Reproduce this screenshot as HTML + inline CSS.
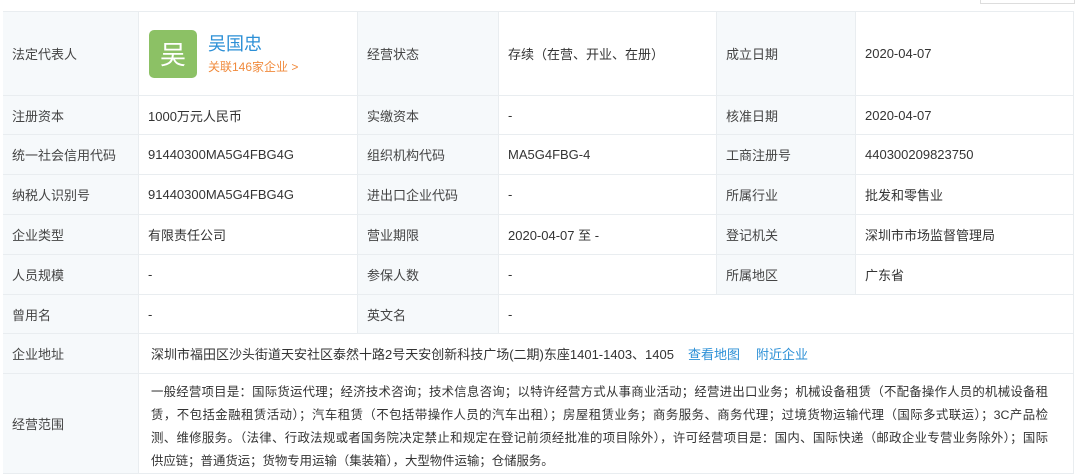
<!DOCTYPE html>
<html><head><meta charset="utf-8"><style>
body{margin:0;width:1080px;height:472px;background:#fff;font-family:"Liberation Sans","Noto Sans CJK SC",sans-serif;font-size:13px;color:#333;position:relative;overflow:hidden}
.c{position:absolute;box-sizing:border-box;border-right:1px solid #e9edf0;border-bottom:1px solid #e9edf0;display:flex;align-items:center;padding-left:9px}
.l{background:#f6f9fb;color:#444}
a{color:#2b8fd6;text-decoration:none}
.ln{width:897px;white-space:nowrap;font-size:12.4px;text-align:justify;text-align-last:justify;text-justify:inter-character;height:23px;overflow:hidden}
.ln.e{text-align-last:left}
</style></head><body>
<div style="position:absolute;left:980px;top:-1px;width:93px;height:4px;border:1px solid #ddd;border-top:none"></div>
<div style="position:absolute;left:3px;top:11px;width:1071px;height:462px;border-top:1px solid #e9edf0;border-left:1px solid #e9edf0;box-sizing:border-box"></div>
<div class="c l" style="left:3px;top:12px;width:136px;height:84px">法定代表人</div>
<div class="c" style="left:139px;top:12px;width:219px;height:84px;padding-left:10px">
<div style="width:48px;height:48px;background:#8cc165;border-radius:5px;color:#fff;font-size:26px;display:flex;align-items:center;justify-content:center">吴</div>
<div style="margin-left:11px"><div style="color:#2b8fd6;font-size:18px;line-height:22px">吴国忠</div><div style="color:#f08a3c;font-size:12px;margin-top:3px">关联146家企业 &gt;</div></div></div>
<div class="c l" style="left:358px;top:12px;width:141px;height:84px">经营状态</div>
<div class="c" style="left:499px;top:12px;width:218px;height:84px">存续（在营、开业、在册）</div>
<div class="c l" style="left:717px;top:12px;width:139px;height:84px">成立日期</div>
<div class="c" style="left:856px;top:12px;width:218px;height:84px">2020-04-07</div>
<div class="c l" style="left:3px;top:96px;width:136px;height:39px">注册资本</div>
<div class="c" style="left:139px;top:96px;width:219px;height:39px">1000万元人民币</div>
<div class="c l" style="left:358px;top:96px;width:141px;height:39px">实缴资本</div>
<div class="c" style="left:499px;top:96px;width:218px;height:39px">-</div>
<div class="c l" style="left:717px;top:96px;width:139px;height:39px">核准日期</div>
<div class="c" style="left:856px;top:96px;width:218px;height:39px">2020-04-07</div>
<div class="c l" style="left:3px;top:135px;width:136px;height:40px">统一社会信用代码</div>
<div class="c" style="left:139px;top:135px;width:219px;height:40px">91440300MA5G4FBG4G</div>
<div class="c l" style="left:358px;top:135px;width:141px;height:40px">组织机构代码</div>
<div class="c" style="left:499px;top:135px;width:218px;height:40px">MA5G4FBG-4</div>
<div class="c l" style="left:717px;top:135px;width:139px;height:40px">工商注册号</div>
<div class="c" style="left:856px;top:135px;width:218px;height:40px">440300209823750</div>
<div class="c l" style="left:3px;top:175px;width:136px;height:40px">纳税人识别号</div>
<div class="c" style="left:139px;top:175px;width:219px;height:40px">91440300MA5G4FBG4G</div>
<div class="c l" style="left:358px;top:175px;width:141px;height:40px">进出口企业代码</div>
<div class="c" style="left:499px;top:175px;width:218px;height:40px">-</div>
<div class="c l" style="left:717px;top:175px;width:139px;height:40px">所属行业</div>
<div class="c" style="left:856px;top:175px;width:218px;height:40px">批发和零售业</div>
<div class="c l" style="left:3px;top:215px;width:136px;height:40px">企业类型</div>
<div class="c" style="left:139px;top:215px;width:219px;height:40px">有限责任公司</div>
<div class="c l" style="left:358px;top:215px;width:141px;height:40px">营业期限</div>
<div class="c" style="left:499px;top:215px;width:218px;height:40px">2020-04-07 至 -</div>
<div class="c l" style="left:717px;top:215px;width:139px;height:40px">登记机关</div>
<div class="c" style="left:856px;top:215px;width:218px;height:40px">深圳市市场监督管理局</div>
<div class="c l" style="left:3px;top:255px;width:136px;height:40px">人员规模</div>
<div class="c" style="left:139px;top:255px;width:219px;height:40px">-</div>
<div class="c l" style="left:358px;top:255px;width:141px;height:40px">参保人数</div>
<div class="c" style="left:499px;top:255px;width:218px;height:40px">-</div>
<div class="c l" style="left:717px;top:255px;width:139px;height:40px">所属地区</div>
<div class="c" style="left:856px;top:255px;width:218px;height:40px">广东省</div>
<div class="c l" style="left:3px;top:295px;width:136px;height:39px">曾用名</div>
<div class="c" style="left:139px;top:295px;width:219px;height:39px">-</div>
<div class="c l" style="left:358px;top:295px;width:141px;height:39px">英文名</div>
<div class="c" style="left:499px;top:295px;width:575px;height:39px">-</div>
<div class="c l" style="left:3px;top:334px;width:136px;height:40px">企业地址</div>
<div class="c" style="left:139px;top:334px;width:935px;height:40px;padding-left:12px">深圳市福田区沙头街道天安社区泰然十路2号天安创新科技广场(二期)东座1401-1403、1405<a style="margin-left:14px">查看地图</a><a style="margin-left:16px">附近企业</a></div>
<div class="c l" style="left:3px;top:374px;width:136px;height:100px">经营范围</div>
<div class="c" style="left:139px;top:374px;width:935px;height:100px;align-items:flex-start;padding:7px 0 0 12px;line-height:23px;overflow:hidden"><div>
<div class="ln">一般经营项目是：国际货运代理；经济技术咨询；技术信息咨询；以特许经营方式从事商业活动；经营进出口业务；机械设备租赁（不配备操作人员的机械设备租</div>
<div class="ln">赁，不包括金融租赁活动）；汽车租赁（不包括带操作人员的汽车出租）；房屋租赁业务；商务服务、商务代理；过境货物运输代理（国际多式联运）；3C产品检</div>
<div class="ln">测、维修服务。（法律、行政法规或者国务院决定禁止和规定在登记前须经批准的项目除外），许可经营项目是：国内、国际快递（邮政企业专营业务除外）；国际</div>
<div class="ln e">供应链；普通货运；货物专用运输（集装箱），大型物件运输；仓储服务。</div>
</div></div>
</body></html>
